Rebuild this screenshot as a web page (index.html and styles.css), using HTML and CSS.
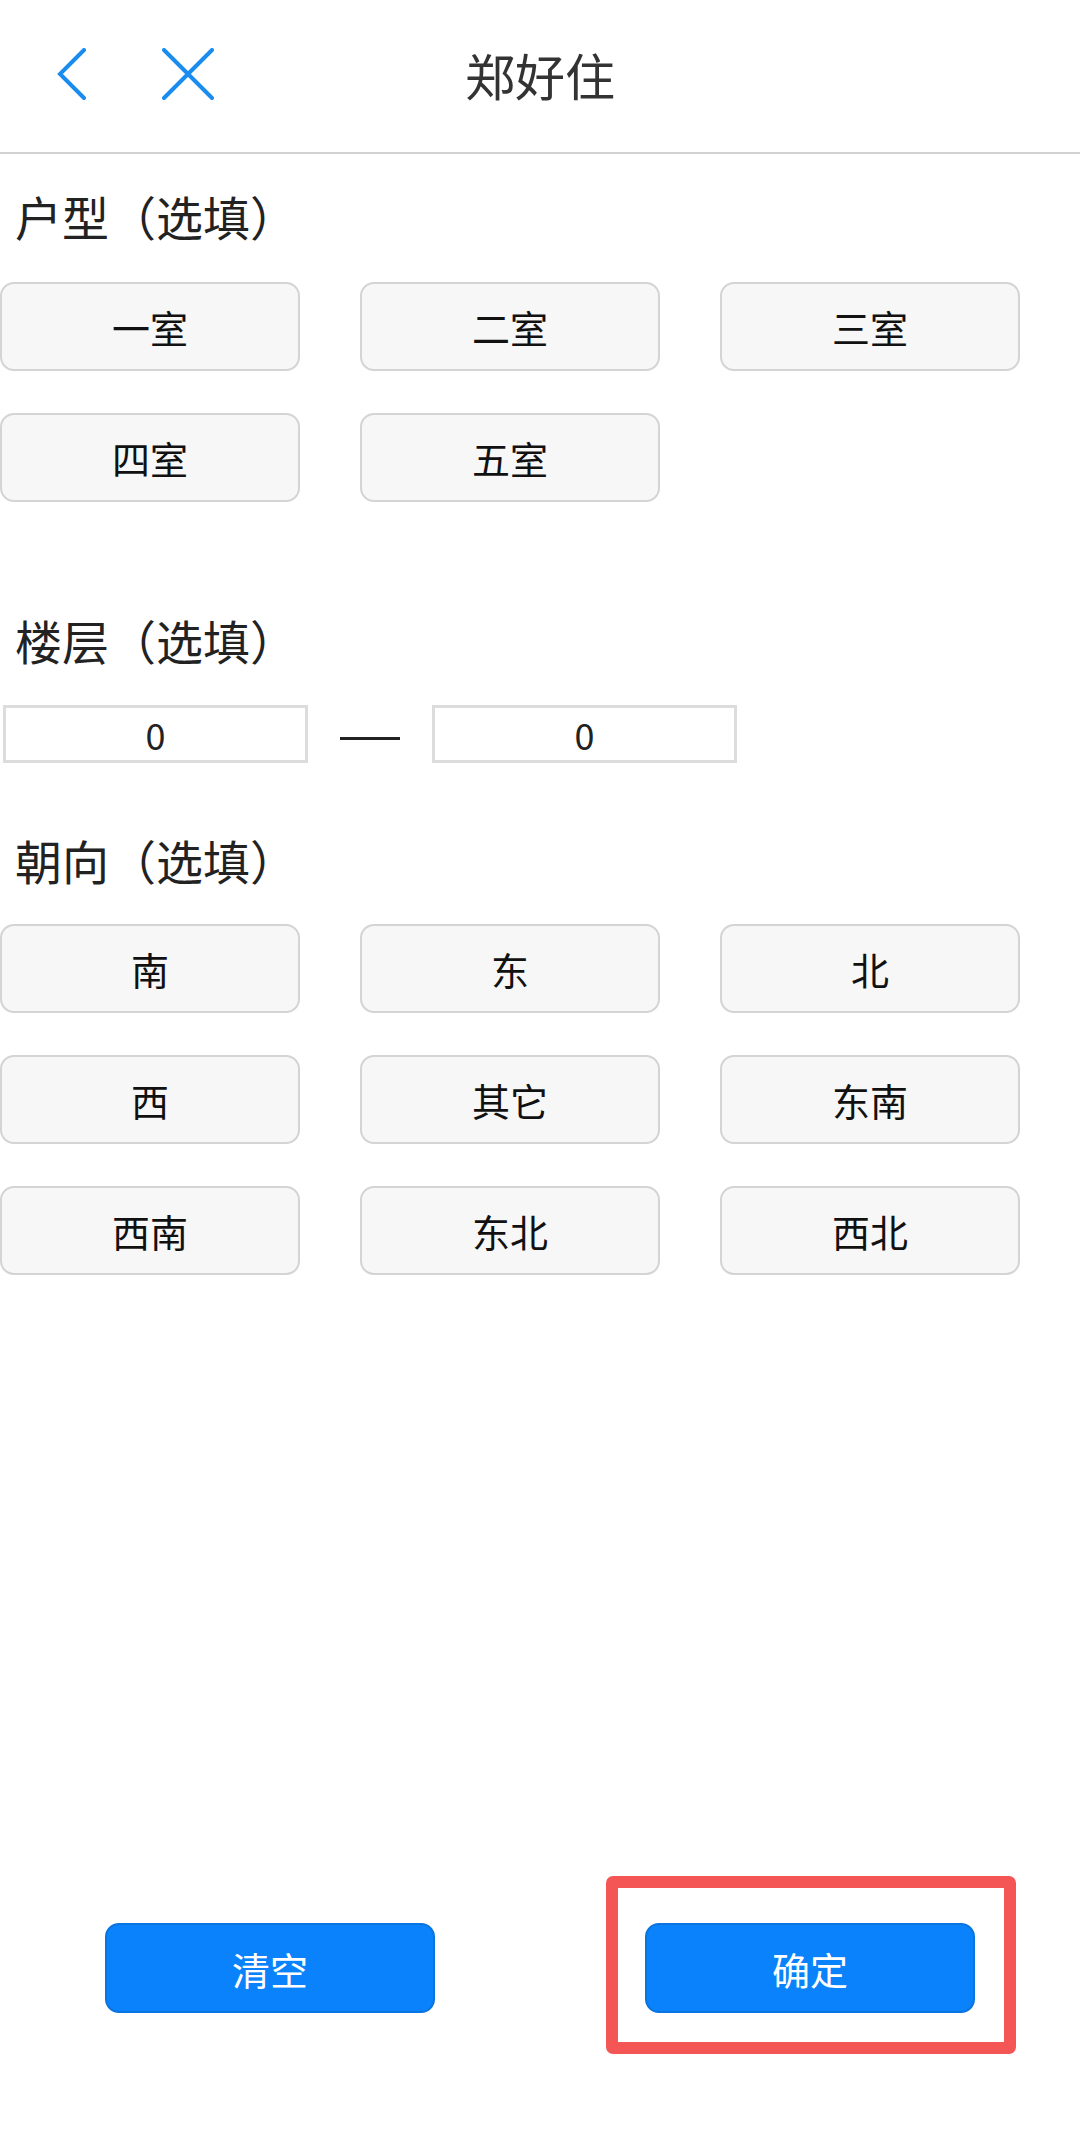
FILE: index.html
```html
<!DOCTYPE html>
<html lang="zh-CN">
<head>
<meta charset="utf-8">
<title>郑好住</title>
<link rel="stylesheet" href="styles.css">
</head>
<body>
<div class="page">
  <header class="topbar">
    <div class="nav-icons">
      <svg class="icon-back" width="30" height="52" viewBox="0 0 30 52"><path d="M27 2 L3 26 L27 50" fill="none" stroke="#1a8cf0" stroke-width="4" stroke-linecap="round" stroke-linejoin="miter"/></svg>
      <svg class="icon-close" width="52" height="52" viewBox="0 0 52 52"><path d="M2 2 L50 50 M50 2 L2 50" fill="none" stroke="#1a8cf0" stroke-width="4" stroke-linecap="round"/></svg>
    </div>
    <div class="topbar-title">郑好住</div>
    <div></div>
  </header>

  <section class="section sec-type">
    <h2 class="section-title">户型（选填）</h2>
    <div class="opt-grid">
      <div class="opt">一室</div>
      <div class="opt">二室</div>
      <div class="opt">三室</div>
      <div class="opt">四室</div>
      <div class="opt">五室</div>
    </div>
  </section>

  <section class="section sec-floor">
    <h2 class="section-title">楼层（选填）</h2>
    <div class="range">
      <input class="range-input" type="text" value="0">
      <div class="range-dash"></div>
      <input class="range-input" type="text" value="0">
    </div>
  </section>

  <section class="section sec-dir">
    <h2 class="section-title">朝向（选填）</h2>
    <div class="opt-grid">
      <div class="opt">南</div>
      <div class="opt">东</div>
      <div class="opt">北</div>
      <div class="opt">西</div>
      <div class="opt">其它</div>
      <div class="opt">东南</div>
      <div class="opt">西南</div>
      <div class="opt">东北</div>
      <div class="opt">西北</div>
    </div>
  </section>

  <footer class="footer">
    <button class="primary-btn btn-clear">清空</button>
    <div class="highlight">
      <button class="primary-btn">确定</button>
    </div>
  </footer>
</div>
</body>
</html>
```

FILE: styles.css
```css
html, body {
  margin: 0;
  padding: 0;
  background: #ffffff;
}
body {
  font-family: "Noto Sans CJK SC", "Noto Sans", sans-serif;
  color: #222;
  overflow: hidden;
  text-spacing-trim: space-all;
}
.page {
  min-height: 2143px;
  display: flex;
  flex-direction: column;
}
.topbar {
  height: 154px;
  box-sizing: border-box;
  padding-bottom: 4px;
  border-bottom: 2px solid #d2d2d2;
  display: grid;
  grid-template-columns: 1fr auto 1fr;
  align-items: center;
}
.nav-icons {
  display: flex;
  align-items: center;
  padding-left: 57px;
  gap: 75px;
}
.icon-back, .icon-close {
  display: block;
}
.topbar-title {
  font-size: 50px;
  line-height: 50px;
  color: #333;
}
.section-title {
  margin: 0;
  font-weight: normal;
  font-size: 47px;
  line-height: 46px;
  height: 46px;
  padding-left: 15px;
  color: #222;
}
.sec-type { margin-top: 39px; }
.sec-floor { margin-top: 115px; }
.sec-dir { margin-top: 74px; }

.opt-grid {
  margin-top: 43px;
  display: grid;
  grid-template-columns: repeat(3, 300px);
  column-gap: 60px;
  row-gap: 42px;
}
.sec-dir .opt-grid { margin-top: 41px; }
.opt {
  height: 89px;
  box-sizing: border-box;
  border: 2px solid #d4d4d4;
  border-radius: 14px;
  background: #f7f7f7;
  display: flex;
  align-items: center;
  justify-content: center;
  font-size: 38px;
  color: #111;
}
.range {
  margin-top: 42px;
  display: flex;
  align-items: center;
  padding-left: 3px;
  gap: 32px;
}
.range-input {
  width: 305px;
  height: 58px;
  box-sizing: border-box;
  border: 3px solid #dcdcdc;
  border-radius: 0;
  padding: 0;
  margin: 0;
  background: #fff;
  text-align: center;
  font-family: "Noto Sans CJK SC", "Noto Sans", sans-serif;
  font-size: 36px;
  color: #222;
  outline: none;
}
.range-dash {
  width: 60px;
  height: 3px;
  background: #222;
  margin-top: 8px;
}
.footer {
  margin-top: auto;
  display: flex;
  align-items: flex-start;
  padding-bottom: 89px;
}
.primary-btn {
  width: 330px;
  height: 90px;
  box-sizing: border-box;
  border: 2px solid #0a74e0;
  border-radius: 14px;
  background: #0a82fb;
  color: #fff;
  font-family: "Noto Sans CJK SC", "Noto Sans", sans-serif;
  font-size: 38px;
  padding: 0;
  display: block;
}
.btn-clear {
  margin-left: 105px;
  margin-top: 47px;
}
.highlight {
  margin-left: 171px;
  border: 12px solid #f45656;
  border-radius: 7px;
  padding: 35px 29px 29px 27px;
}
```
